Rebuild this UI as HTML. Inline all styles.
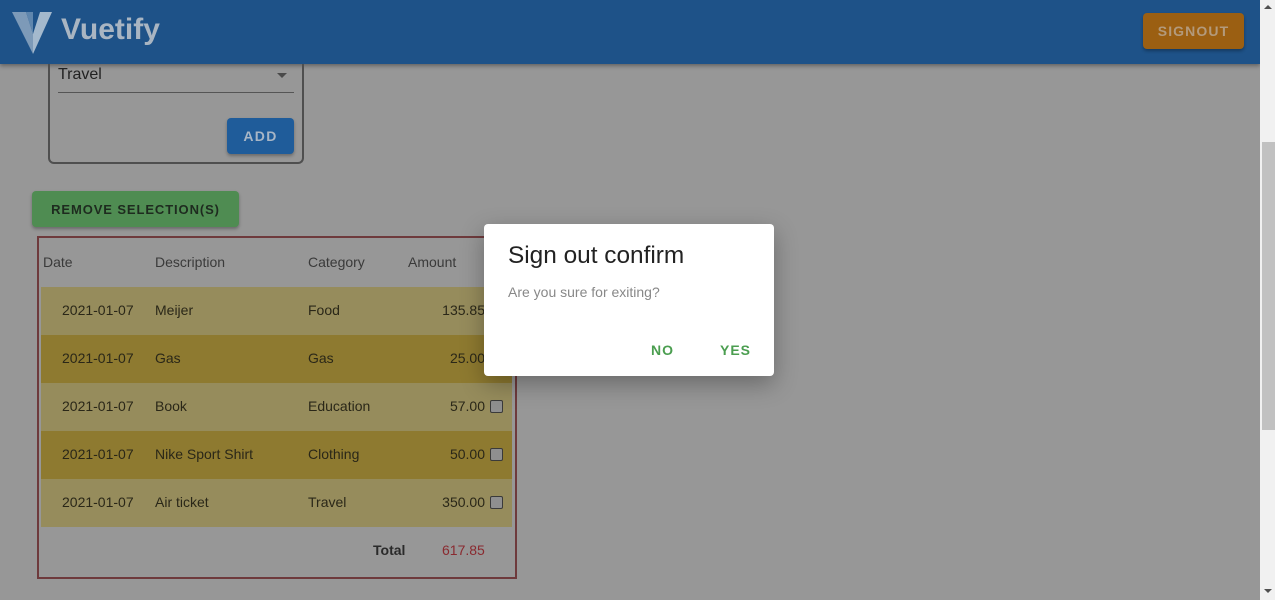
<!DOCTYPE html>
<html><head><meta charset="utf-8"><style>
*{margin:0;padding:0;box-sizing:border-box}
body{width:1275px;height:600px;overflow:hidden;background:#979797;font-family:"Liberation Sans",Arial,sans-serif;position:relative}
.abs{position:absolute}
.hdr{left:0;top:0;width:1260px;height:64px;background:#1e5288;box-shadow:0 2px 4px rgba(0,0,0,.35)}
.btn{border-radius:4px;font-weight:bold;letter-spacing:1.3px;font-size:14px;display:flex;align-items:center;justify-content:center;box-shadow:0 2px 3px rgba(0,0,0,.3)}
.row{left:41px;width:471px;height:48px;font-size:14px;color:#2a2718}
.row span{position:absolute;top:15px}
.cb{position:absolute;left:449px;top:17px;width:13px;height:13px;border:1px solid #3a3a3a;border-radius:2px;background:#8f8f8f}
</style></head><body>
<div class="abs hdr">
  <svg class="abs" style="left:12px;top:8px" width="42" height="46" viewBox="0 0 42 46">
    <polygon points="0,4 14,4 21,26 21,46" fill="#7d9ab8"/>
    <polygon points="21,26 28,4 40,4 21,46" fill="#a4b9cd"/>
    <polygon points="14,4 21,4 21,26" fill="#5f86ad"/>
  </svg>
  <div class="abs" style="left:61px;top:13px;font-size:30px;font-weight:bold;color:#a9b5c2">Vuetify</div>
  <div class="abs btn" style="left:1143px;top:13px;width:101px;height:36px;background:#9b5f12;color:#b39a7c;letter-spacing:1.1px">SIGNOUT</div>
</div>
<div class="abs" style="left:48px;top:64px;width:256px;height:100px;border:2px solid #4f4f4f;border-top:none;border-radius:0 0 6px 6px"></div>
<div class="abs" style="left:58px;top:66px;font-size:16px;color:#222">Travel</div>
<div class="abs" style="left:277px;top:73px;width:0;height:0;border-left:5px solid transparent;border-right:5px solid transparent;border-top:5px solid #4a4a4a"></div>
<div class="abs" style="left:58px;top:92px;width:236px;height:1px;background:#555"></div>
<div class="abs btn" style="left:227px;top:118px;width:67px;height:36px;background:#1f5c9a;color:#a8b6c6">ADD</div>
<div class="abs btn" style="left:32px;top:191px;width:207px;height:36px;background:#4f8c52;color:#1e2b1f;font-size:13px;letter-spacing:0.9px">REMOVE SELECTION(S)</div>
<div class="abs" style="left:37px;top:236px;width:480px;height:343px;border:2px solid #6e3a3c"></div>
<div class="abs" style="left:43px;top:254px;font-size:14px;color:#3a3a3a">Date</div>
<div class="abs" style="left:155px;top:254px;font-size:14px;color:#3a3a3a">Description</div>
<div class="abs" style="left:308px;top:254px;font-size:14px;color:#3a3a3a">Category</div>
<div class="abs" style="left:408px;top:254px;font-size:14px;color:#3a3a3a">Amount</div>

<div class="abs row" style="top:287px;background:#968c5c"><span style="left:21px">2021-01-07</span><span style="left:114px">Meijer</span><span style="left:267px">Food</span><span style="right:27px">135.85</span></div>
<div class="abs row" style="top:335px;background:#8e7a30"><span style="left:21px">2021-01-07</span><span style="left:114px">Gas</span><span style="left:267px">Gas</span><span style="right:27px">25.00</span></div>
<div class="abs row" style="top:383px;background:#968c5c"><span style="left:21px">2021-01-07</span><span style="left:114px">Book</span><span style="left:267px">Education</span><span style="right:27px">57.00</span><div class="cb"></div></div>
<div class="abs row" style="top:431px;background:#8e7a30"><span style="left:21px">2021-01-07</span><span style="left:114px">Nike Sport Shirt</span><span style="left:267px">Clothing</span><span style="right:27px">50.00</span><div class="cb"></div></div>
<div class="abs row" style="top:479px;background:#968c5c"><span style="left:21px">2021-01-07</span><span style="left:114px">Air ticket</span><span style="left:267px">Travel</span><span style="right:27px">350.00</span><div class="cb"></div></div>
<div class="abs" style="left:373px;top:542px;font-size:14px;font-weight:bold;color:#2a2a2a">Total</div>
<div class="abs" style="left:442px;top:542px;font-size:14px;color:#8a2a30">617.85</div>

<div class="abs" style="left:484px;top:224px;width:290px;height:152px;background:#fff;border-radius:4px;box-shadow:0 8px 24px rgba(0,0,0,.3)">
  <div class="abs" style="left:24px;top:18px;font-size:24.4px;color:#222">Sign out confirm</div>
  <div class="abs" style="left:24px;top:60px;font-size:14px;color:#888">Are you sure for exiting?</div>
  <div class="abs" style="left:167px;top:118px;font-size:14px;font-weight:bold;letter-spacing:1px;color:#4b9e50">NO</div>
  <div class="abs" style="left:236px;top:118px;font-size:14px;font-weight:bold;letter-spacing:1px;color:#4b9e50">YES</div>
</div>

<div class="abs" style="left:1260px;top:0;width:15px;height:600px;background:#f1f1f1"></div>
<div class="abs" style="left:1262px;top:142px;width:13px;height:288px;background:#c1c1c1"></div>
<div class="abs" style="left:1264px;top:5px;width:0;height:0;border-left:4px solid transparent;border-right:4px solid transparent;border-bottom:4px solid #505050"></div>
<div class="abs" style="left:1264px;top:589px;width:0;height:0;border-left:4px solid transparent;border-right:4px solid transparent;border-top:4px solid #505050"></div>
</body></html>
